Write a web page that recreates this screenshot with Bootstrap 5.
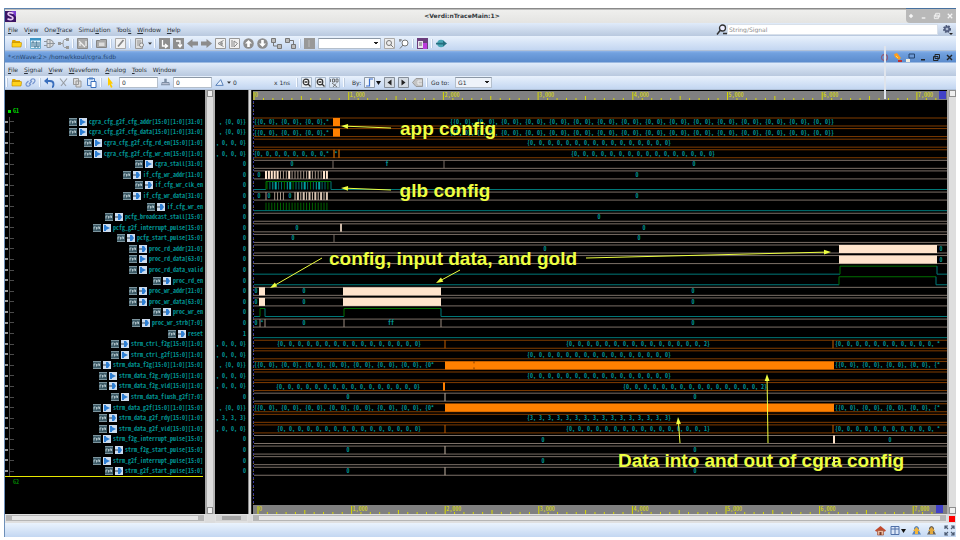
<!DOCTYPE html>
<html lang="en">
<head>
<meta charset="utf-8">
<meta name="viewport" content="width=device-width, initial-scale=1">
<title>Verdi:nTraceMain:1</title>
<link rel="stylesheet" href="https://cdn.jsdelivr.net/npm/bootstrap@5.3.0/dist/css/bootstrap.min.css">
<style>
  :root { --wave-font: "Noto Sans Mono CJK SC", "Liberation Mono", monospace; --teal: #009494; }
  body { font: 6px/10px "DejaVu Sans", sans-serif; color: #2b3138; background: #fff; }
  .app-window { margin: 8px 4px 0; border-left: 1px solid #6d8fb8; }
  .title-strip { min-height: 15px; background: linear-gradient(#8a8a8a 0 1px, #efefed 2px, #e4e4e2); }
  .title-strip h1 { font: bold 6px/15px "DejaVu Sans", sans-serif; color: #33393c; padding-right: 52px; }
  .accent-edge { border-top: 1px solid #5c82ad; }
  .win-controls { background: #b9b9b9; border-radius: 0 0 0 4px; width: 50px; gap: 4px; color: #f4f4f4; border-top: 1px solid #47719f; }
  .menu-strip { min-height: 13px; background: linear-gradient(#e0ebfa, #b9c9df); padding-right: 3px; }
  .menu-strip nav { gap: 6px; padding-left: 3px; }
  .menu-strip a { color: #2b3138; text-decoration: none; line-height: 11px; }
  .tool-strip { gap: 3px; padding-left: 1px; background: linear-gradient(#e8f1fc, #c3d6f1); border-bottom: 1px solid #b0c1d8; }
  .tool-one { min-height: 15px; padding-left: 6px; }
  .tool-two { min-height: 14px; }
  .tool-strip .btn { width: 11px; height: 11px; border: 0; border-radius: 1px; line-height: 0; flex: none; }
  .tool-strip .btn-drop { width: 17px; }
  .tool-strip .btn-thin { width: 3px; }
  .tool-strip .btn-slim { width: 9px; }
  .tool-strip svg, .status-strip svg, .doc-strip svg, .menu-strip svg { width: 11px; height: 11px; display: inline-block; }
  .tool-strip .btn-slim svg, .doc-strip svg { width: 9px; height: 9px; }
  .grip { width: 2px; height: 9px; flex: none; border-left: 1px solid #f8fbff; border-right: 1px solid #bccbdf; }
  .field { border: 1px solid #b4bfcc; border-top-color: #8c98a6; background: #fff; border-radius: 0; font: 6px/9px "DejaVu Sans", sans-serif; color: #2b3138; padding: 0 2px; height: 11px; min-width: 0; }
  .field-num { width: 39px; }
  .field-combo { width: 63px; }
  .field-goto { width: 37px; background: #eef3fa; }
  select.field { appearance: none; background-image: linear-gradient(45deg, transparent 50%, #222 50%), linear-gradient(-45deg, transparent 50%, #222 50%); background-size: 2px 3px; background-repeat: no-repeat; background-position: right 4px center, right 2px center; }
  .search-box { width: 211px; border-color: #d8e0ea; padding-left: 1px; }
  .search-box::placeholder { color: #8b8b8b; }
  .doc-strip { min-height: 12px; background: linear-gradient(#8db4e8 0, #71a1df 2px, #5c8ccd 11px, #dbe6f5 12px); color: #24456f; padding: 0 2px 0 3px; }
  .doc-strip .btn, .win-controls .btn { line-height: 0; border: 0; width: 9px; }
  .win-controls svg { width: 8px; height: 8px; }
  .names-col { width: 200px; flex: none; background: #000; }
  .bar-col { width: 10px; flex: none; background: #dcdcdc; border-left: 2px solid #a8a8a8; border-right: 2px solid #b4b4b4; }
  .vals-col { width: 33px; flex: none; background: #000; }
  .split-col { width: 4px; flex: none; background: #dcdcdc; border-right: 1px solid #333; border-left: 1px solid #888; }
  .edge-col { width: 9px; flex: none; background: #dedede; border-left: 2px solid #aaa; }
  .knob { height: 7px; background: #efefef; border: 1px solid #8e8e8e; }
  .sig-grid { display: grid; grid-template-rows: repeat(36, minmax(0, 1fr)); padding: 16px 2px 27px 0; font: bold 6px/8px var(--wave-font); color: var(--teal); height: 0; min-height: 100%; }
  .sig-row { white-space: pre; min-height: 0; }
  .sig-row svg { width: 8px; height: 8px; flex: none; margin-right: 2px; }
  .sig-row .tree { width: 9px; height: 100%; border-left: 3px solid transparent; border-image: linear-gradient(#000 40%, #999 40% 55%, #000 55%) 1; margin-right: auto; display: flex; align-items: center; flex: none; }
  .sig-row .tree::before { content: ""; width: 1px; height: 100%; background: #4a4a4a; margin-left: 1px; }
  .sig-row .tree::after { content: ""; width: 4px; height: 1px; background: #4a4a4a; }
  .grp { color: #00c800; padding-left: 3px; gap: 2px; }
  .grp::before { content: ""; width: 3px; height: 3px; background: #00d800; }
  .grp-next { color: #007a00; border-top: 1px solid #e8e800; }
  .grp-next::before { background: transparent; }
  .scroll-strip { min-height: 9px; background: #e0e0e0; }
  .track { margin: 1px; height: 6px; background: #e6e6e6; border: 1px solid #b5b5b5; border-width: 1px 6px; }
  .track-mid { background: #a4a4a4; border-color: #d2d2d2; }
  .stop { width: 6px; height: 6px; background: #f00; }
  .status-strip { min-height: 14px; background: linear-gradient(#eaf3fd, #c3d7f2); gap: 4px; padding-right: 1px; }
  .status-strip .btn { line-height: 0; border: 0; }
  .status-strip .btn:last-child { margin-left: 3px; }
  .wave-col { min-width: 0; background: #000; }
  .wave-col svg { display: block; width: 100%; height: auto; }
  .wave-col text { font: bold 6px var(--wave-font); fill: var(--teal); }
  .wave-col .scale { fill: #e0e000; font-weight: normal; }
  .wave-col .note { font: bold 19px "Liberation Sans", Arial, sans-serif; fill: #eeff41; }
  .time-cursor { position: absolute; right: 70px; top: 38px; width: 2px; height: 53px; background: #dfe4ec; }
</style>
</head>
<body>
<svg class="d-none" aria-hidden="true">
  <symbol id="i-folder" viewBox="0 0 11 11"><path d="M1 3q0-1 1-1h2l1 1h4v2H1z" fill="#e0a400"/><path d="M1 4.500h9q.6 0 .6.600L10 9H1z" fill="#ffd21c" stroke="#b98700" stroke-width=".6"/></symbol>
  <symbol id="i-wave" viewBox="0 0 11 11"><path d="M.5.5h10v10H.5z" fill="#dff0fa" stroke="#6baed0"/><path d="M0 0h11v2.500H0z" fill="#3a93c4"/><path d="M2 9V4h2v5h2V4h1v5h2V4" fill="none" stroke="#3d6e8c"/></symbol>
  <symbol id="i-gate" viewBox="0 0 11 11"><path d="M3 1.500h3q3.500 1 3.500 4t-3.500 4H3zM0 3.500h3M0 7.500h3M9 5.500h2M3 5.500h6M6 2v7" fill="#ddd" stroke="#8f959c"/></symbol>
  <symbol id="i-hub" viewBox="0 0 11 11"><path d="M2 5.500h3M9.500 1.500h-3q-1.500 0-1.500 4t1.500 4h3" fill="none" stroke="#999"/><path d="M0 4h3v3H0zM8 0h3v3H8zM8 8h3v3H8z" fill="#999"/></symbol>
  <symbol id="i-box" viewBox="0 0 11 11"><path d="M.5.5h10v10H.5z" fill="#aaa" stroke="#8b8b8b"/><path d="M2 3l6 6M3 8V5M9 3v5" stroke="#eee" stroke-width="1.300"/></symbol>
  <symbol id="i-win" viewBox="0 0 11 11"><path d="M.5 2.500h3l1-1h6v8H.5z" fill="#aaa" stroke="#858585"/><path d="M3 4.500h5.500v3.500H3z" fill="#ddd"/></symbol>
  <symbol id="i-edit" viewBox="0 0 11 11"><path d="M.5.5h10v10H.5z" fill="#f2f2f2" stroke="#aaa"/><path d="M3 8.500L8.500 2" stroke="#888" stroke-width="1.800"/></symbol>
  <symbol id="i-doc" viewBox="0 0 11 11"><path d="M1.500.5h7v10h-7z" fill="#ddd" stroke="#999"/><path d="M3 3h4M3 5h4M3 7h2" stroke="#999"/><circle cx="7.500" cy="7" r="2" fill="#eee" stroke="#888"/></symbol>
  <symbol id="i-caret" viewBox="0 0 11 11"><path d="M0 3h11l-5.500 6z" fill="#333"/></symbol>
  <symbol id="i-l" viewBox="0 0 11 11"><path d="M0 0h11v11H0z" fill="#8e8e8e"/><path d="M3.500 2v6H8M6 6l2.500 2L6 10" fill="none" stroke="#fff" stroke-width="1.300"/></symbol>
  <symbol id="i-j" viewBox="0 0 11 11"><path d="M0 0h11v11H0z" fill="#8e8e8e"/><path d="M3 3h4v5M5 6.500l2 2.500 2-2.500" fill="none" stroke="#fff" stroke-width="1.300"/></symbol>
  <symbol id="i-left" viewBox="0 0 11 11"><path d="M0 5.500L5.500 1v2.500H11v4H5.500V10z" fill="#8c8c8c"/></symbol>
  <symbol id="i-right" viewBox="0 0 11 11"><path d="M11 5.500L5.500 1v2.500H0v4h5.500V10z" fill="#8c8c8c"/></symbol>
  <symbol id="i-pc" viewBox="0 0 11 11"><path d="M.5.5h10v10H.5z" fill="#f1f1f1" stroke="#999"/><path d="M8.500 2.500L3 5.500l5.500 3" fill="none" stroke="#888"/><circle cx="6.500" cy="5.500" r="1.500" fill="#999"/></symbol>
  <symbol id="i-pd" viewBox="0 0 11 11"><path d="M.5.5h10v10H.5z" fill="#f1f1f1" stroke="#999"/><path d="M3 2v7M5 3l3.500 2.500L5 9z" fill="none" stroke="#888"/></symbol>
  <symbol id="i-up" viewBox="0 0 11 11"><circle cx="5.500" cy="5.500" r="5.300" fill="#8d8d8d"/><path d="M5.500 2L9 5.500H6.800V9H4.200V5.500H2z" fill="#fff"/></symbol>
  <symbol id="i-down" viewBox="0 0 11 11"><circle cx="5.500" cy="5.500" r="5.300" fill="#8d8d8d"/><path d="M5.500 9L9 5.500H6.800V2H4.200v3.500H2z" fill="#fff"/></symbol>
  <symbol id="i-n1" viewBox="0 0 11 11"><path d="M2.500 3v5H8" fill="none" stroke="#777"/><path d="M.5.5h4v4h-4zM6.500 6.500h4v4h-4z" fill="#bbb" stroke="#777"/></symbol>
  <symbol id="i-n2" viewBox="0 0 11 11"><path d="M3 2.500h5.500V8" fill="none" stroke="#777"/><path d="M.5.5h4v4h-4zM6.500 6.500h4v4h-4z" fill="#bbb" stroke="#777"/></symbol>
  <symbol id="i-gray" viewBox="0 0 11 11"><path d="M0 0h11v11H0z" fill="#999"/><path d="M4 2h2v7H4z" fill="#aaa"/></symbol>
  <symbol id="i-find" viewBox="0 0 11 11"><path d="M.5.5h10v10H.5z" fill="#eee" stroke="#aaa"/><circle cx="5" cy="5" r="2.500" fill="none" stroke="#777"/><path d="M6.500 6.500l3 3" stroke="#777"/></symbol>
  <symbol id="i-find2" viewBox="0 0 11 11"><circle cx="7" cy="5" r="3" fill="#fff" stroke="#777"/><path d="M5 7L2 10.500M1 2h3M2 1v3" stroke="#777"/></symbol>
  <symbol id="i-purple" viewBox="0 0 11 11"><path d="M0 0h11v11H0z" fill="#6b3d7d"/><path d="M1 3h5v7H1z" fill="#e9e1ee"/><path d="M6 5h4v6H6z" fill="#bc3bdd"/><path d="M2 5h3M2 7h3" stroke="#666"/></symbol>
  <symbol id="i-globe" viewBox="0 0 11 11"><circle cx="5" cy="5.500" r="3.800" fill="#4aa5b5"/><path d="M0 4.700h7V2.500l4 3-4 3V6.500H0z" fill="#246f80"/></symbol>
  <symbol id="i-link" viewBox="0 0 11 11"><path d="M5 4l2-2q1.500-.7 2.500.5t0 2.500L7.500 7M6 7L4 9q-1.500.7-2.500-.5T1.500 6L3.500 4M4 7l3-3" fill="none" stroke="#7796cf" stroke-width="1.200"/></symbol>
  <symbol id="i-undo" viewBox="0 0 11 11"><path d="M2 4h4q3.500 0 3.500 3T8 10" fill="none" stroke="#3a6fbd" stroke-width="1.800"/><path d="M0 4l4-3.500v7z" fill="#3a6fbd"/></symbol>
  <symbol id="i-cut" viewBox="0 0 11 11"><path d="M2 1.500l6 7.500M9 1.500L3 9" stroke="#9a9fa6" stroke-width="1.200"/></symbol>
  <symbol id="i-copy" viewBox="0 0 11 11"><path d="M1.500 1.500h5v6h-5zM4 4h5v6H4z" fill="#ddd" stroke="#999"/></symbol>
  <symbol id="i-paste" viewBox="0 0 11 11"><path d="M1.500 1.500h7v7h-7z" fill="#dbe9fb" stroke="#4f80c4"/><path d="M5 4.500h5v6H5z" fill="#fff" stroke="#3a6fbd"/><path d="M3 .5h4v2H3z" fill="#4f80c4"/></symbol>
  <symbol id="i-cursor" viewBox="0 0 11 11"><path d="M3 0l5 6.500-2 .3L7.500 10 6 11 4.500 7.500 3 9z" fill="#ffcb00"/></symbol>
  <symbol id="i-stamp" viewBox="0 0 11 11"><path d="M4 1h3v4h3l1 4H0l1-4h3z" fill="#7d8ea4"/><path d="M1.500 7h8" stroke="#dde" /></symbol>
  <symbol id="i-delta" viewBox="0 0 11 11"><path d="M1 9L7 2l3 7z" fill="#e7f0fb" stroke="#587fb8" stroke-width="1.200"/></symbol>
  <symbol id="i-zin" viewBox="0 0 11 11"><path d="M.5.5h10v10H.5z" fill="#e8eef5" stroke="#a9b9cc"/><circle cx="5" cy="5" r="2.800" fill="#fff" stroke="#333" stroke-width="1.200"/><path d="M7 7l2.500 2.500M3.500 5h3" stroke="#333" stroke-width="1.300"/></symbol>
  <symbol id="i-full" viewBox="0 0 11 11"><path d="M.5.5h10v10H.5z" fill="#dde8f5" stroke="#a9b9cc"/><path d="M1.500 2v3M3.500 2h2v3h-2zM7 2h2v3H7zM3 6l5 4M7 6.500L4 10" fill="none" stroke="#555" stroke-width=".8"/></symbol>
  <symbol id="i-edge" viewBox="0 0 17 11"><path d="M.5.5h10v10H.5z" fill="#eef3f9" stroke="#8e9aa8"/><path d="M2 9h3.500V2H9" fill="none" stroke="#3a6fd0" stroke-width="1.200"/><path d="M12 4h5l-2.500 4z" fill="#111"/></symbol>
  <symbol id="i-prev" viewBox="0 0 11 11"><path d="M.5.5h10v10H.5z" fill="#d4dbe3" stroke="#858e99"/><path d="M7.500 2.500v6l-4-3z" fill="#222"/></symbol>
  <symbol id="i-next" viewBox="0 0 11 11"><path d="M.5.5h10v10H.5z" fill="#d4dbe3" stroke="#858e99"/><path d="M3.500 2.500v6l4-3z" fill="#222"/></symbol>
  <symbol id="i-tag" viewBox="0 0 11 11"><path d="M.5 5.500L4 1.500h6.500v8H4z" fill="#c4c4c4" stroke="#999"/><path d="M10 4H6v3h4" fill="none" stroke="#eee"/></symbol>
  <symbol id="i-search" viewBox="0 0 11 11"><circle cx="6.500" cy="4" r="3" fill="#eef" stroke="#333" stroke-width="1.300"/><path d="M4.500 6L1 10.500M7 9.500h4" stroke="#333" stroke-width="1.500"/></symbol>
  <symbol id="i-gear" viewBox="0 0 11 11"><circle cx="5" cy="5" r="3" fill="#59678a" stroke="#4c5877" stroke-width="2" stroke-dasharray="1.500 1"/><circle cx="5" cy="5" r="1.300" fill="#aebad0"/><path d="M7 9h4l-2 2z" fill="#222"/></symbol>
  <symbol id="i-ring" viewBox="0 0 9 9"><circle cx="4.500" cy="4.500" r="3" fill="none" stroke="#8d5e7e" stroke-width="1.300"/></symbol>
  <symbol id="i-pin" viewBox="0 0 9 9"><path d="M1 1l3-1 4 5-2 2-4-3z" fill="#ff9d1e"/><path d="M5 7h4v2H5z" fill="#b33"/><path d="M3 3l2 2" stroke="#ffe04a"/></symbol>
  <symbol id="i-dock" viewBox="0 0 9 9"><path d="M3 1h5.500v4H3z" fill="#6c98d4" stroke="#26456f"/><path d="M0 6h4v3H0z" fill="#f2eee0"/></symbol>
  <symbol id="i-min" viewBox="0 0 9 9"><path d="M2 6h4v1.500H2z" fill="currentColor"/></symbol>
  <symbol id="i-rest" viewBox="0 0 9 9"><path d="M3 1.500h4.500v4H3zM1.500 3.500H6v4H1.500z" fill="none" stroke="currentColor"/></symbol>
  <symbol id="i-x" viewBox="0 0 9 9"><path d="M2 2l5 5M7 2L2 7" stroke="currentColor" stroke-width="1.400"/></symbol>
  <symbol id="i-dot" viewBox="0 0 9 9"><path d="M4.500 2L7 4.500 4.500 7 2 4.500z" fill="currentColor"/></symbol>
  <symbol id="i-home" viewBox="0 0 11 11"><path d="M0 5.500L5.500 1 11 5.500l-1 1H1z" fill="#c14a2e"/><path d="M2.500 5.500h6V10h-6z" fill="#e9b79d" stroke="#a4543b" stroke-width=".7"/><path d="M4.500 7h2v3h-2z" fill="#7b3c27"/></symbol>
  <symbol id="i-table" viewBox="0 0 17 11"><path d="M1 1.500h8v8H1zM1 4h8M5 1.500v8" fill="#dbe6f7" stroke="#5070a8"/><path d="M11 4h5l-2.500 4z" fill="#111"/></symbol>
  <symbol id="i-bell" viewBox="0 0 11 11"><path d="M1 9.500L3 6V3q2.500-4 5 0v3l2 3.500z" fill="#5a83b8"/><path d="M5.500 2L9 6H7v3H4V6H2z" fill="#f2b63c"/></symbol>
  <symbol id="i-bell2" viewBox="0 0 11 11"><path d="M1 9.500L3 6V3q2.500-4 5 0v3l2 3.500z" fill="#6b6358"/><path d="M5.500 2L9 6H7v3H4V6H2z" fill="#e3a93c"/></symbol>
  <symbol id="i-expand" viewBox="0 0 11 11"><path d="M1 4V1h3M7 1h3v3M10 7v3H7M4 10H1V7M1 1l3 3M10 1L7 4M10 10L7 7M1 10l3-3" fill="none" stroke="#4c5b73" stroke-width="1.200"/></symbol>
  <symbol id="i-src" viewBox="0 0 8 8"><path d="M0 0h8v8H0z" fill="#3d5a66"/><path d="M0 .5h8M0 7.500h8" stroke="#7c949d"/><path d="M1 5.500V3h1.500M3.500 5.500V3M5 5V3h1.500v2" fill="none" stroke="#c8d8dd" stroke-width=".8"/></symbol>
  <symbol id="i-out" viewBox="0 0 8 8"><path d="M0 0h8v8H0z" fill="#cddcee"/><path d="M1 1h2v6H1zM3 2l4 2-4 2z" fill="#2e7fd4"/></symbol>
  <symbol id="i-in" viewBox="0 0 8 8"><path d="M0 0h8v8H0z" fill="#cddcee"/><path d="M3 1h2l2 3-2 3H3z" fill="#2e7fd4"/><path d="M0 4h3" stroke="#345"/></symbol>
</svg>

<div class="app-window position-relative d-flex flex-column">
  <header class="title-strip d-flex align-items-stretch justify-content-between">
    <svg class="accent-edge" width="65" height="15" viewBox="0 0 65 15" preserveAspectRatio="xMinYMin slice" role="img" aria-label="Verdi"><path d="M0 2h11v11H0z" fill="#3a1566"/><path d="M6 2h5v6z" fill="#7b3fd0"/><path d="M8.500 4.500q-5-2-5.500.5c0 2 5 2 5 4s-3.500 2-5.500.8" fill="none" stroke="#e8c9f5" stroke-width="1.700"/></svg>
    <h1 class="m-0">&lt;Verdi:nTraceMain:1&gt;</h1>
    <div class="win-controls d-flex align-items-center justify-content-center">
      <button class="btn p-0 text-reset" aria-label="Stick"><svg><use href="#i-dot"/></svg></button>
      <button class="btn p-0 text-reset" aria-label="Minimize"><svg><use href="#i-min"/></svg></button>
      <button class="btn p-0 text-reset" aria-label="Restore"><svg><use href="#i-rest"/></svg></button>
      <button class="btn p-0 text-reset" aria-label="Close"><svg><use href="#i-x"/></svg></button>
    </div>
  </header>

  <div class="menu-strip d-flex align-items-center justify-content-between">
    <nav class="d-flex" aria-label="Main menu">
      <a href="#"><u>F</u>ile</a><a href="#">V<u>i</u>ew</a><a href="#">One<u>T</u>race</a><a href="#">Simul<u>a</u>tion</a><a href="#">Tool<u>s</u></a><a href="#"><u>W</u>indow</a><a href="#"><u>H</u>elp</a>
    </nav>
    <form class="d-flex align-items-center">
      <label for="find" class="d-flex" aria-label="Find"><svg><use href="#i-search"/></svg></label>
      <input id="find" class="field search-box" placeholder="String/Signal">
      <button type="button" class="btn p-0 border-0 lh-1 ms-1 d-flex" aria-label="Search settings"><svg><use href="#i-gear"/></svg></button>
    </form>
  </div>

  <div class="tool-strip tool-one d-flex align-items-center" id="mainTools" role="toolbar" aria-label="Main tools"></div>

  <div class="doc-strip d-flex align-items-center">
    <span class="me-auto">*&lt;nWave:2&gt; /home/kkoul/cgra.fsdb</span>
    <div class="d-flex gap-1 text-dark">
      <svg><use href="#i-ring"/></svg><svg><use href="#i-pin"/></svg><svg><use href="#i-dock"/></svg>
      <button class="btn p-0 text-reset" aria-label="Minimize wave"><svg><use href="#i-min"/></svg></button>
      <button class="btn p-0 text-reset" aria-label="Restore wave"><svg><use href="#i-rest"/></svg></button>
      <button class="btn p-0 text-reset" aria-label="Close wave"><svg><use href="#i-x"/></svg></button>
    </div>
  </div>

  <div class="menu-strip d-flex align-items-center">
    <nav class="d-flex" aria-label="Wave menu">
      <a href="#"><u>F</u>ile</a><a href="#"><u>S</u>ignal</a><a href="#"><u>V</u>iew</a><a href="#"><u>W</u>aveform</a><a href="#"><u>A</u>nalog</a><a href="#"><u>T</u>ools</a><a href="#">W<u>i</u>ndow</a>
    </nav>
  </div>

  <div class="tool-strip tool-two d-flex align-items-center" id="waveTools" role="toolbar" aria-label="Wave tools"></div>

  <main class="d-flex align-items-stretch">
    <section class="names-col"><div class="sig-grid" id="names"></div></section>
    <div class="bar-col d-flex flex-column justify-content-between"><div class="knob"></div><div class="knob"></div></div>
    <section class="vals-col"><div class="sig-grid" id="values"></div></section>
    <div class="split-col"></div>
    <section class="wave-col flex-grow-1"><svg id="waves" viewBox="252 90 695 424" role="img" aria-label="Waveforms"></svg></section>
    <div class="edge-col d-flex flex-column justify-content-between"><div class="knob"></div><div class="knob"></div></div>
  </main>

  <div class="scroll-strip d-flex">
    <div class="names-col bg-transparent"><div class="track"></div></div>
    <div class="bar-col border-0"></div>
    <div class="vals-col bg-transparent"><div class="track track-mid"></div></div>
    <div class="split-col border-0"></div>
    <div class="flex-grow-1"><div class="track"></div></div>
    <div class="edge-col border-0 d-flex align-items-center justify-content-center"><div class="stop"></div></div>
  </div>

  <footer class="status-strip d-flex align-items-center justify-content-end">
    <button class="btn p-0" aria-label="Home"><svg><use href="#i-home"/></svg></button>
    <button class="btn p-0" aria-label="Layout"><svg style="width:17px"><use href="#i-table"/></svg></button>
    <button class="btn p-0" aria-label="Notices"><svg><use href="#i-bell"/></svg></button>
    <button class="btn p-0" aria-label="Alerts"><svg><use href="#i-bell2"/></svg></button>
    <button class="btn p-0" aria-label="Expand"><svg><use href="#i-expand"/></svg></button>
  </footer>
  <div class="time-cursor"></div>
</div>

<script>
  const btn = (icon, label, cls = "") => `<button class="btn p-0 ${cls}" aria-label="${label}"><svg ${cls === "btn-drop" ? 'style="width:17px"' : cls === "btn-thin" ? 'style="width:4px"' : ""}><use href="#i-${icon}"/></svg></button>`;
  const grip = '<span class="grip"></span>';
  const group = list => list.split(" ").map(n => n === "|" ? grip : btn(n, n, n === "caret" ? "btn-thin" : "")).join("");

  document.getElementById("mainTools").innerHTML =
    group("folder | wave gate hub | box | win | edit | doc caret | l j left right pc pd up down n1 n2 | gray") +
    '<select class="field field-combo" aria-label="Active signal"><option></option></select>' +
    group("find find2 | purple | globe");

  document.getElementById("waveTools").innerHTML =
    grip + group("folder link | undo cut copy paste | cursor") +
    '<input class="field field-num" aria-label="Cursor time" value="0">' + btn("stamp", "Marker", "btn-slim") +
    '<input class="field field-num" aria-label="Marker time" value="0">' + btn("delta", "Delta", "btn-slim") + btn("caret", "Delta menu", "btn-thin") +
    '<output style="width:38px">0</output><span style="width:19px">x 1ns</span>' + grip +
    btn("zin", "Zoom out") + btn("zin", "Zoom in") + btn("full", "Zoom all") + grip +
    '<span style="width:13px" class="ps-1">By:</span>' + btn("edge", "Edge", "btn-drop") + btn("prev", "Previous") + btn("next", "Next") + btn("tag", "Tag") + grip +
    '<label for="goto" style="width:21px">Go to:</label><select id="goto" class="field field-goto"><option>G1</option></select>';

  const pairs = ", {0, 0}}", list0 = ", 0, 0, 0}";
  // name, icon direction, value at cursor
  const signals = [
    ["cgra_cfg_g2f_cfg_addr[15:0][1:0][31:0]", "out", pairs], ["cgra_cfg_g2f_cfg_data[15:0][1:0][31:0]", "out", pairs],
    ["cgra_cfg_g2f_cfg_rd_en[15:0][1:0]", "out", list0], ["cgra_cfg_g2f_cfg_wr_en[15:0][1:0]", "out", list0],
    ["cgra_stall[31:0]", "out", "0"], ["if_cfg_wr_addr[11:0]", "in", "0"], ["if_cfg_wr_clk_en", "in", "0"],
    ["if_cfg_wr_data[31:0]", "in", "0"], ["if_cfg_wr_en", "in", "0"], ["pcfg_broadcast_stall[15:0]", "in", "0"],
    ["pcfg_g2f_interrupt_pulse[15:0]", "out", "0"], ["pcfg_start_pulse[15:0]", "in", "0"], ["proc_rd_addr[21:0]", "in", "0"],
    ["proc_rd_data[63:0]", "out", "0"], ["proc_rd_data_valid", "out", "0"], ["proc_rd_en", "in", "0"],
    ["proc_wr_addr[21:0]", "in", "0"], ["proc_wr_data[63:0]", "in", "0"], ["proc_wr_en", "in", "0"],
    ["proc_wr_strb[7:0]", "in", "0"], ["reset", "in", "1"], ["strm_ctrl_f2g[15:0][1:0]", "in", list0],
    ["strm_ctrl_g2f[15:0][1:0]", "out", list0], ["strm_data_f2g[15:0][1:0][15:0]", "in", pairs],
    ["strm_data_f2g_rdy[15:0][1:0]", "out", list0], ["strm_data_f2g_vld[15:0][1:0]", "in", list0],
    ["strm_data_flush_g2f[7:0]", "out", "0"], ["strm_data_g2f[15:0][1:0][15:0]", "out", pairs],
    ["strm_data_g2f_rdy[15:0][1:0]", "in", ", 3, 3, 3}"], ["strm_data_g2f_vld[15:0][1:0]", "out", list0],
    ["strm_f2g_interrupt_pulse[15:0]", "out", "0"], ["strm_f2g_start_pulse[15:0]", "in", "0"],
    ["strm_g2f_interrupt_pulse[15:0]", "out", "0"], ["strm_g2f_start_pulse[15:0]", "in", "0"]
  ];
  document.getElementById("names").innerHTML =
    '<div class="sig-row grp d-flex align-items-center">G1</div>' +
    signals.map(s => `<div class="sig-row d-flex align-items-center"><span class="tree"></span><svg><use href="#i-src"/></svg><svg><use href="#i-${s[1]}"/></svg><span>${s[0]}</span></div>`).join("") +
    '<div class="sig-row grp grp-next d-flex align-items-center">G2</div>';
  document.getElementById("values").innerHTML = '<div></div>' +
    signals.map(s => `<div class="sig-row d-flex align-items-center justify-content-end">${s[2]}</div>`).join("");

  const L = 254, R = 947, OR = "#803c00", GY = "#7c7068", PEACH = "#ffe4cc", TEAL = "#007878", GREEN = "#007000";
  const mid = r => 122 + r * 381 / 36;
  let out = "";
  const line = (x1, y1, x2, y2, c, w = 1) => { out += `<path d="M${x1} ${y1}L${x2} ${y2}" stroke="${c}" stroke-width="${w}"/>`; };
  const rect = (x, y, w, h, c) => { out += `<rect x="${x}" y="${y}" width="${w}" height="${h}" fill="${c}"/>`; };
  const text = (x, y, s, anchor = "middle", cls = "") => { out += `<text x="${x}" y="${y}" text-anchor="${anchor}" class="${cls}">${s}</text>`; };
  const label = (r, x, s, anchor) => text(x, mid(r) + 2, s, anchor);
  const bus = (r, c) => { line(L, mid(r) - 4, R, mid(r) - 4, c); line(L, mid(r) + 4, R, mid(r) + 4, c); };
  const cut = (r, x, c, w = 1) => line(x, mid(r) - 4, x, mid(r) + 4, c, w);
  const block = (r, x1, x2, c) => rect(x1, mid(r) - 4, x2 - x1, 8, c);
  const many = (n, last = "0", v = "0") => "{" + (v + ", ").repeat(n - 1) + last + "}";

  // time scales
  const scale = (y, x0, step, mark) => {
    rect(253, y, 694, 9, "#808080");
    for (let i = 0; i < 74; i++) {
      const x = x0 + i * step / 10, h = i % 10 === 0 ? 8 : i % 5 === 0 ? 4 : 2;
      if (x < mark) line(x, y + 9 - h, x, y + 9, "#d8d800");
      if (i % 10 === 0) text(x + 1, y + 6, i ? i / 10 + ",000" : "0", "start", "scale");
    }
    rect(mark, y, 7, 8, "#4040c8");
  };
  scale(91, 254, 94.7, 939); scale(505, 258, 93.6, 936);
  out += `<path d="M253.500 101V504" stroke="#3a3a9c" stroke-dasharray="2 2"/><path d="M253.500 103V504" stroke="#77682a" stroke-dasharray="1 7"/>`;

  [0, 1, 2, 3, 21, 22, 23, 24, 25, 27, 28, 29].forEach(r => bus(r, OR));
  [4, 5, 7, 9, 10, 11, 12, 13, 16, 17, 19, 26, 30, 31, 32, 33].forEach(r => bus(r, GY));

  const pair16 = "{" + Array(16).fill("{0, 0}").join(", ") + "}";
  [0, 1].forEach(r => { label(r, 254, "{{0, 0}, {0, 0}, {0, 0},*", "start"); block(r, 333, 340, "#ff8000"); label(r, 642, pair16); });
  [2, 22, 24].forEach(r => label(r, 599, many(16)));
  label(28, 599, many(16, "3", "3"));
  label(3, 254, "{0, 0, 0, 0, 0, 0, 0, 0,*", "start"); label(3, 336, "*"); cut(3, 334, "#ff8000"); cut(3, 339, "#ff8000"); label(3, 643, many(16));
  label(4, 292, "0"); cut(4, 333, GY); label(4, 387, "f"); cut(4, 444, GY); label(4, 694, "0");
  label(5, 259, "0"); label(5, 637, "0"); label(7, 259, "0"); label(7, 637, "0");
  for (let i = 0; i < 22; i++) {
    const x = 266 + i * 2.9, strong = i < 5 || i % 7 === 1 || i > 19;
    cut(5, x, strong ? PEACH : "#a8988a", strong ? 2 : 1);
    if (i !== 1 && i !== 2 && i !== 7 && i !== 8 && i !== 9) cut(7, x, i > 9 ? "#d8c4b2" : "#a8988a", i > 9 && i % 2 ? 2 : 1);
    cut(6, x + 1, i % 5 === 2 || i % 5 === 3 ? "#00a0a0" : i % 3 ? "#006c6c" : GREEN, i % 5 === 3 ? 2 : 1);
    cut(8, x, "#006400", 1);
  }
  label(7, 269, "0"); label(7, 290, "0");
  const bit = (r, highs) => {
    let x = L; const lo = mid(r) + 4, hi = mid(r) - 4;
    highs.forEach(([a, b]) => { line(x, lo, a, lo, TEAL); line(a, lo, a, hi, GREEN); line(a, hi, b, hi, GREEN); line(b, hi, b, lo, TEAL); x = b; });
    line(x, lo, R, lo, TEAL);
  };
  bit(6, [[266, 331]]); bit(8, []); bit(14, [[840, 937]]); bit(15, [[839, 936]]); bit(18, [[260, 265], [344, 441]]); bit(20, []);
  label(9, 599, "0");
  label(10, 297, "0"); cut(10, 341, "#cdb9a8", 2); label(10, 644, "0");
  label(11, 293, "0"); cut(11, 334, GY); label(11, 639, "0");
  [12, 13].forEach(r => { label(r, 545, "0"); block(r, 839, 937, PEACH); label(r, 941, "0"); });
  [16, 17].forEach(r => { label(r, 256, "0"); block(r, 259, 265, PEACH); label(r, 304, "0"); block(r, 343, 441, PEACH); label(r, 693, "0"); });
  label(19, 256, "0"); label(19, 262, "*"); [260, 265, 344, 441].forEach(x => cut(19, x, "#9c8c80")); label(19, 304, "0"); label(19, 391, "ff"); label(19, 693, "0");
  [[21, "2"], [29, "1"]].forEach(([r, n]) => { label(r, 349, many(16)); cut(r, 445, "#c86000"); label(r, 638, many(16, n)); cut(r, 833, "#c86000"); label(r, 835, "{" + "0, ".repeat(11) + "*", "start"); });
  [23, 27].forEach(r => { label(r, 254, "{" + "{0, 0}, ".repeat(7) + "{0*", "start"); block(r, 445, 834, "#ff8000"); label(r, 835, "{" + "{0, 0}, ".repeat(4) + "{*", "start"); });
  line(474, mid(23) - 4, 474, mid(23) - 2, "#803c00"); line(474, mid(23) + 2, 474, mid(23) + 4, "#803c00");
  label(25, 348, many(16)); cut(25, 444, "#ff8000", 2); label(25, 695, many(16, "2"));
  [26, 31, 33].forEach(r => { label(r, 348, "0"); cut(r, 445, "#c4b4a4"); label(r, 695, "0"); });
  [30, 32].forEach(r => { label(r, 543, "0"); cut(r, 834, PEACH, 2); label(r, 890, "0"); });

  // annotations
  const arrow = (x1, y1, x2, y2) => {
    const a = Math.atan2(y2 - y1, x2 - x1), bx = x2 - 7 * Math.cos(a), by = y2 - 7 * Math.sin(a), nx = 2.4 * Math.sin(a), ny = -2.4 * Math.cos(a);
    line(x1, y1, bx, by, "#eeff41");
    out += `<path d="M${x2} ${y2}L${bx + nx} ${by + ny}L${bx - nx} ${by - ny}Z" fill="#eeff41"/>`;
  };
  text(448, 135, "app config", "middle", "note"); arrow(391, 128, 341, 126);
  text(445, 197, "glb config", "middle", "note"); arrow(391, 190, 341, 188);
  text(453, 265, "config, input data, and gold", "middle", "note"); arrow(322, 258, 270, 288); arrow(460, 270, 436, 283); arrow(586, 258, 831, 252);
  text(761, 467, "Data into and out of cgra config", "middle", "note"); arrow(680, 443, 678, 417); arrow(768, 443, 767, 374);
  document.getElementById("waves").innerHTML = out;
</script>
<script src="https://cdn.jsdelivr.net/npm/bootstrap@5.3.0/dist/js/bootstrap.bundle.min.js"></script>
</body>
</html>
